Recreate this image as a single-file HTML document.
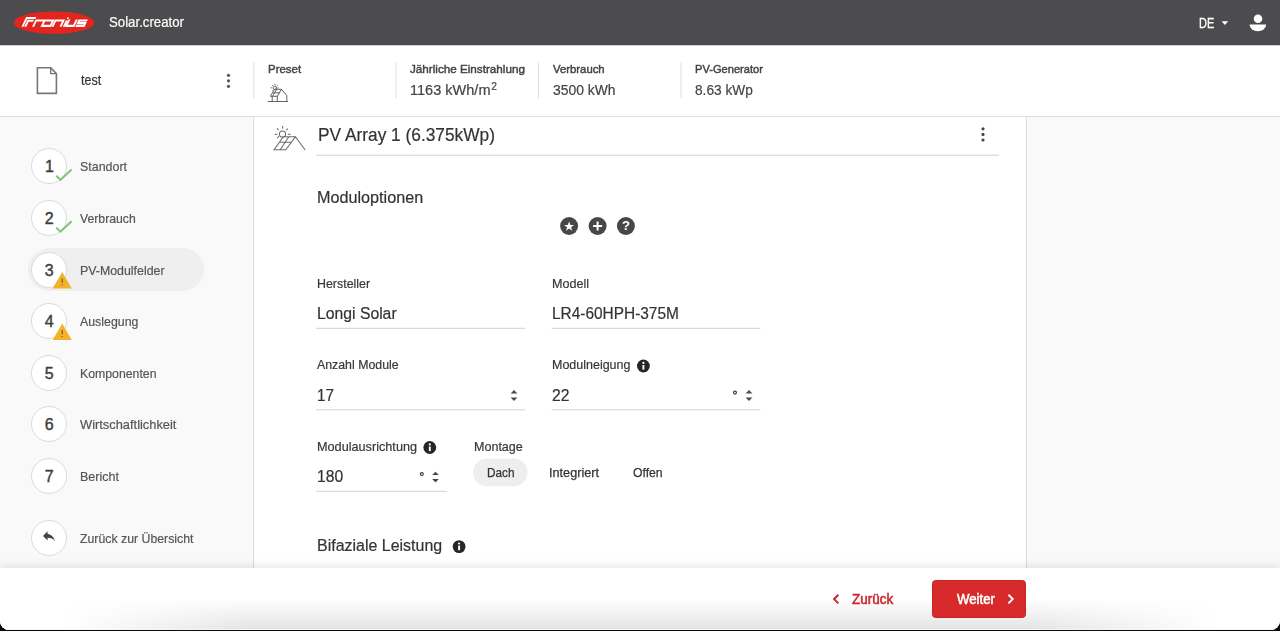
<!DOCTYPE html>
<html><head><meta charset="utf-8"><style>
*{box-sizing:border-box;margin:0;padding:0}
html,body{width:1280px;height:631px;overflow:hidden;background:#0a0a0a}
body{font-family:"Liberation Sans",sans-serif;color:#333;position:relative}
.abs{position:absolute}
svg{position:absolute;overflow:visible}
.t{position:absolute;white-space:nowrap;line-height:1}
#screen{position:absolute;left:0;top:0;width:1280px;height:630px;background:#f9f9f9;overflow:hidden;border-radius:0 0 9px 9px}
#topbar{position:absolute;left:0;top:0;width:1280px;height:45px;background:#4c4c4e;border-bottom:1px solid #434345}
#sub{position:absolute;left:0;top:45px;width:1280px;height:72px;background:#fff;border-bottom:1px solid #dedede}
#side{position:absolute;left:0;top:117px;width:254px;height:514px;background:#f9f9f9;border-right:1px solid #dcdcdc}
#main{position:absolute;left:254px;top:117px;width:773px;height:514px;background:#fff;border-right:1px solid #dcdcdc}
#footer{position:absolute;left:0;top:568px;width:1280px;height:63px;background:#fff;box-shadow:0 -3px 8px rgba(0,0,0,.09)}
#bshadow{position:absolute;left:60px;top:598px;width:1160px;height:31px;background:linear-gradient(to bottom,rgba(0,0,0,0),rgba(0,0,0,.10));-webkit-mask-image:linear-gradient(to right,transparent 0,#000 16%,#000 84%,transparent 100%)}
#brow{position:absolute;left:0;top:629px;width:1280px;height:1px;background:#f6f6f6}
.circ{position:absolute;width:36px;height:36px;border-radius:50%;background:#fff;border:1px solid #dadada}
</style></head><body>
<div id="screen">
<div id="topbar"></div>
<svg style="left:0;top:0" width="1280" height="44"><ellipse cx="54" cy="22.6" rx="40.3" ry="11.2" fill="#e2261d"/></svg>
<svg style="left:0;top:0" width="120" height="44"><g transform="matrix(1 0 -0.48 1 12.79 0)" fill="none" stroke="#fff" stroke-width="2.05" stroke-linejoin="miter"><path d="M22.5 26.65V17.9H31.6M25.3 26.65V20.7H30.6M33.1 26.65V20.4H41.0M41.6 20.4H50.1V25.85H41.6zM52.5 26.65V20.4H60.5V26.65M63.8 26.65V20.4M66 19.6V25.85H73.4V19.6M84.4 20.4H76.2V23.1H83.6V25.85H75.4"/><rect x="63" y="17.5" width="1.6" height="1.4" fill="#fff" stroke="none"/></g></svg>
<div class="t" style="left:108.80px;top:14.63px;font-size:14.5px;color:#fff;transform:scaleX(0.9124);transform-origin:0.00px 0;-webkit-text-stroke:0.2px #fff;">Solar.creator</div>
<div class="t" style="left:1198.90px;top:15.95px;font-size:14px;color:#fff;transform:scaleX(0.7866);transform-origin:0.00px 0;-webkit-text-stroke:0.35px #fff;-webkit-text-stroke-width:0.3px;">DE</div>
<svg style="left:0;top:0" width="1280" height="44"><path d="M1221.6 21.2h6.6l-3.3 3.9z" fill="#fff"/><circle cx="1258" cy="18.8" r="4.3" fill="#fff"/><path d="M1249.5 24.6h16.7a8.35 6.6 0 0 1 -16.7 0z" fill="#fff"/></svg>
<div id="sub"></div>
<div class="abs" style="left:0;top:45px;width:1280px;height:1px;background:#d4d4d4"></div>
<svg style="left:0;top:0" width="1280" height="120"><path d="M37.4 67.7h13.3l5.7 5.9v19.8h-19z" fill="none" stroke="#777" stroke-width="1.6" stroke-linejoin="miter"/><path d="M50.7 67.7v5.9h5.7" fill="none" stroke="#777" stroke-width="1.4"/><circle cx="228.5" cy="75.3" r="1.6" fill="#555"/><circle cx="228.5" cy="80.8" r="1.6" fill="#555"/><circle cx="228.5" cy="86.3" r="1.6" fill="#555"/><rect x="253.3" y="62.5" width="1" height="36" fill="#e0e0e0"/><rect x="395.6" y="62.5" width="1" height="36" fill="#e0e0e0"/><rect x="538" y="62.5" width="1" height="36" fill="#e0e0e0"/><rect x="680.5" y="62.5" width="1" height="36" fill="#e0e0e0"/><g fill="none" stroke="#5c5c5c" stroke-width="0.95" stroke-linecap="round"><circle cx="274.8" cy="87.8" r="1.7"/><path d="M272.4 85.3l.3.3M275 84.2v.4M277.5 85.3l-.3.3M271 87.8h.4M272.6 90.3l.3-.3M278.4 88h-.3"/><path d="M275 89.3h6.5l-4.2 7h-6.6z M276.7 89.3l-4.2 7 M273.2 92.8h6.5"/><path d="M281.5 89.3l5.3 6.3v5.9 M272.2 96.3v5.2 M277.3 96.3v5.2 M268.2 101.5h19.4"/></g></svg>
<div class="t" style="left:81.40px;top:73.15px;font-size:14px;color:#333;transform:scaleX(0.8958);transform-origin:0.00px 0;-webkit-text-stroke:0.2px #333;">test</div>
<div class="t" style="left:267.90px;top:64.47px;font-size:11.5px;color:#444;transform:scaleX(0.9955);transform-origin:0.00px 0;-webkit-text-stroke:0.35px #444;-webkit-text-stroke-width:0.45px;">Preset</div>
<div class="t" style="left:409.90px;top:64.47px;font-size:11.5px;color:#444;transform:scaleX(1.0155);transform-origin:0.00px 0;-webkit-text-stroke:0.35px #444;-webkit-text-stroke-width:0.45px;">Jährliche Einstrahlung</div>
<div class="t" style="left:409.90px;top:82.53px;font-size:14.5px;color:#444;transform:scaleX(1.0025);transform-origin:0.00px 0;-webkit-text-stroke:0.2px #444;">1163 kWh/m</div>
<div class="t" style="left:491.20px;top:81.83px;font-size:10px;color:#444;-webkit-text-stroke:0.2px #444;">2</div>
<div class="t" style="left:553.20px;top:64.47px;font-size:11.5px;color:#444;transform:scaleX(0.9857);transform-origin:0.00px 0;-webkit-text-stroke:0.35px #444;-webkit-text-stroke-width:0.45px;">Verbrauch</div>
<div class="t" style="left:552.80px;top:82.53px;font-size:14.5px;color:#444;transform:scaleX(0.9587);transform-origin:0.00px 0;-webkit-text-stroke:0.2px #444;">3500 kWh</div>
<div class="t" style="left:695.20px;top:64.47px;font-size:11.5px;color:#444;transform:scaleX(0.9659);transform-origin:0.00px 0;-webkit-text-stroke:0.35px #444;-webkit-text-stroke-width:0.45px;">PV-Generator</div>
<div class="t" style="left:695.20px;top:82.53px;font-size:14.5px;color:#444;transform:scaleX(0.9437);transform-origin:0.00px 0;-webkit-text-stroke:0.2px #444;">8.63 kWp</div>
<div id="side"></div>
<div class="abs" style="left:27.8px;top:247.8px;width:176.2px;height:43.6px;border-radius:22px;background:#efefef"></div>
<div class="circ" style="left:30.799999999999997px;top:148.2px"></div>
<div class="t" style="left:45.00px;top:159.26px;font-size:16px;color:#3d3d3d;-webkit-text-stroke:0.35px #3d3d3d;-webkit-text-stroke-width:0.4px;">1</div>
<div class="t" style="left:80.20px;top:160.37px;font-size:13.5px;color:#555;transform:scaleX(0.9226);transform-origin:0.00px 0;-webkit-text-stroke:0.2px #555;">Standort</div>
<div class="circ" style="left:30.799999999999997px;top:200px"></div>
<div class="t" style="left:44.70px;top:211.06px;font-size:16px;color:#3d3d3d;-webkit-text-stroke:0.35px #3d3d3d;-webkit-text-stroke-width:0.4px;">2</div>
<div class="t" style="left:80.20px;top:212.17px;font-size:13.5px;color:#555;transform:scaleX(0.9066);transform-origin:0.00px 0;-webkit-text-stroke:0.2px #555;">Verbrauch</div>
<div class="circ" style="left:30.799999999999997px;top:251.5px"></div>
<div class="t" style="left:44.70px;top:262.56px;font-size:16px;color:#3d3d3d;-webkit-text-stroke:0.35px #3d3d3d;-webkit-text-stroke-width:0.4px;">3</div>
<div class="t" style="left:80.20px;top:263.67px;font-size:13.5px;color:#555;transform:scaleX(0.9155);transform-origin:0.00px 0;-webkit-text-stroke:0.2px #555;">PV-Modulfelder</div>
<div class="circ" style="left:30.799999999999997px;top:303px"></div>
<div class="t" style="left:44.70px;top:314.06px;font-size:16px;color:#3d3d3d;-webkit-text-stroke:0.35px #3d3d3d;-webkit-text-stroke-width:0.4px;">4</div>
<div class="t" style="left:80.20px;top:315.17px;font-size:13.5px;color:#555;transform:scaleX(0.9154);transform-origin:0.00px 0;-webkit-text-stroke:0.2px #555;">Auslegung</div>
<div class="circ" style="left:30.799999999999997px;top:354.5px"></div>
<div class="t" style="left:44.70px;top:365.56px;font-size:16px;color:#3d3d3d;-webkit-text-stroke:0.35px #3d3d3d;-webkit-text-stroke-width:0.4px;">5</div>
<div class="t" style="left:80.20px;top:366.67px;font-size:13.5px;color:#555;transform:scaleX(0.9102);transform-origin:0.00px 0;-webkit-text-stroke:0.2px #555;">Komponenten</div>
<div class="circ" style="left:30.799999999999997px;top:406px"></div>
<div class="t" style="left:44.70px;top:417.06px;font-size:16px;color:#3d3d3d;-webkit-text-stroke:0.35px #3d3d3d;-webkit-text-stroke-width:0.4px;">6</div>
<div class="t" style="left:80.20px;top:418.17px;font-size:13.5px;color:#555;transform:scaleX(0.9521);transform-origin:0.00px 0;-webkit-text-stroke:0.2px #555;">Wirtschaftlichkeit</div>
<div class="circ" style="left:30.799999999999997px;top:457.5px"></div>
<div class="t" style="left:44.70px;top:468.56px;font-size:16px;color:#3d3d3d;-webkit-text-stroke:0.35px #3d3d3d;-webkit-text-stroke-width:0.4px;">7</div>
<div class="t" style="left:80.20px;top:469.67px;font-size:13.5px;color:#555;transform:scaleX(0.9262);transform-origin:0.00px 0;-webkit-text-stroke:0.2px #555;">Bericht</div>
<div class="circ" style="left:30.799999999999997px;top:519.6px"></div>
<svg style="left:0;top:0" width="254" height="631"><path d="M56.3 175.79999999999998l4.1 4.1 11.2-10.4" fill="none" stroke="#7cc576" stroke-width="2"/><path d="M56.3 227.6l4.1 4.1 11.2-10.4" fill="none" stroke="#7cc576" stroke-width="2"/><path d="M62.2 272.1l9.6 16.4h-19.2z" fill="#f2b32a"/><path d="M62.2 278.5v4.2 M62.2 284.5v1" stroke="#6b5320" stroke-width="1.1"/><path d="M62.2 323.6l9.6 16.4h-19.2z" fill="#f2b32a"/><path d="M62.2 330v4.2 M62.2 336v1" stroke="#6b5320" stroke-width="1.1"/><path transform="translate(41 528) scale(0.66)" d="M10 9V5l-7 7 7 7v-4.1c5 0 8.5 1.6 11 5.1-1-5-4-10-11-11z" fill="#444"/></svg>
<div class="t" style="left:80.20px;top:531.77px;font-size:13.5px;color:#555;transform:scaleX(0.9113);transform-origin:0.00px 0;-webkit-text-stroke:0.2px #555;">Zurück zur Übersicht</div>
<div id="main"></div>
<svg style="left:0;top:0" width="1280" height="631"><g fill="none" stroke="#6a6a6a" stroke-width="1.05" stroke-linecap="round"><circle cx="282.5" cy="134" r="3.1"/><path d="M282.7 126.3v2 M275 134.3h2 M288.3 134.3h2 M277.4 128.6l1 1.2 M286.6 130l1-1.2 M277.6 137.9l1-1.3"/><path d="M283.2 136.7h12.2l-9.6 13h-11.7z M288.8 136.7l-8.6 13 M280.4 142.3h10.9 M295.4 136.7l9.6 13"/></g><circle cx="983" cy="128.8" r="1.6" fill="#444"/><circle cx="983" cy="134.4" r="1.6" fill="#444"/><circle cx="983" cy="140" r="1.6" fill="#444"/><rect x="316" y="154.7" width="683" height="1" fill="#cfcfcf"/><circle cx="569.1" cy="226" r="9" fill="#474747"/><circle cx="597.6" cy="226" r="9" fill="#474747"/><circle cx="625.9" cy="226" r="9" fill="#474747"/><path transform="translate(569.1 226.6)" d="M0 -5.2L1.3 -1.6H5L2 0.6L3.1 4.2L0 2L-3.1 4.2L-2 0.6L-5 -1.6H-1.3z" fill="#fff"/><path d="M597.6 221.5v9 M593.1 226h9" stroke="#fff" stroke-width="2"/><rect x="316" y="327.8" width="209" height="1" fill="#d2d2d2"/><rect x="551.5" y="327.8" width="209" height="1" fill="#d2d2d2"/><rect x="316" y="409.3" width="209" height="1" fill="#d2d2d2"/><rect x="551.5" y="409.3" width="209" height="1" fill="#d2d2d2"/><rect x="316" y="490.8" width="130.5" height="1" fill="#d2d2d2"/><path d="M510.6 393.4l3.4-3.4 3.4 3.4z M510.6 397.6l3.4 3.4 3.4-3.4z" fill="#4a4a4a"/><path d="M745.6 393.4l3.4-3.4 3.4 3.4z M745.6 397.6l3.4 3.4 3.4-3.4z" fill="#4a4a4a"/><path d="M432.1 475.1l3.4-3.4 3.4 3.4z M432.1 479.1l3.4 3.4 3.4-3.4z" fill="#4a4a4a"/><circle cx="735" cy="392.6" r="1.45" fill="none" stroke="#3c3c3c" stroke-width="1.15"/><circle cx="421.8" cy="474" r="1.45" fill="none" stroke="#3c3c3c" stroke-width="1.15"/><rect x="473.1" y="458.5" width="54.4" height="27.8" rx="13.9" fill="#eeeeee"/></svg>
<svg style="left:0;top:0" width="1280" height="631"><circle cx="643.4" cy="366" r="6.4" fill="#262626"/><circle cx="643.4" cy="362.9" r="1.1" fill="#fff"/><rect x="642.4499999999999" y="365.0" width="1.9" height="4.6" fill="#fff"/><circle cx="429.8" cy="447.5" r="6.4" fill="#262626"/><circle cx="429.8" cy="444.4" r="1.1" fill="#fff"/><rect x="428.85" y="446.5" width="1.9" height="4.6" fill="#fff"/><circle cx="459.1" cy="546.6" r="6.4" fill="#262626"/><circle cx="459.1" cy="543.5" r="1.1" fill="#fff"/><rect x="458.15000000000003" y="545.6" width="1.9" height="4.6" fill="#fff"/></svg>
<div class="t" style="left:622.00px;top:219.40px;font-size:13px;color:#fff;font-weight:bold;">?</div>
<div class="t" style="left:317.50px;top:125.32px;font-size:19px;color:#333;transform:scaleX(0.9110);transform-origin:0.00px 0;-webkit-text-stroke:0.2px #333;">PV Array 1 (6.375kWp)</div>
<div class="t" style="left:316.90px;top:189.20px;font-size:16.3px;color:#333;transform:scaleX(0.9939);transform-origin:0.00px 0;-webkit-text-stroke:0.2px #333;">Moduloptionen</div>
<div class="t" style="left:316.60px;top:276.80px;font-size:13px;color:#383838;transform:scaleX(0.9550);transform-origin:0.00px 0;-webkit-text-stroke:0.2px #383838;">Hersteller</div>
<div class="t" style="left:316.60px;top:304.95px;font-size:16.3px;color:#333;transform:scaleX(0.9666);transform-origin:0.00px 0;-webkit-text-stroke:0.2px #333;">Longi Solar</div>
<div class="t" style="left:551.70px;top:276.80px;font-size:13px;color:#383838;transform:scaleX(0.9687);transform-origin:0.00px 0;-webkit-text-stroke:0.2px #383838;">Modell</div>
<div class="t" style="left:551.70px;top:304.95px;font-size:16.3px;color:#333;transform:scaleX(0.9471);transform-origin:0.00px 0;-webkit-text-stroke:0.2px #333;">LR4-60HPH-375M</div>
<div class="t" style="left:316.60px;top:357.75px;font-size:13px;color:#383838;transform:scaleX(0.9488);transform-origin:0.00px 0;-webkit-text-stroke:0.2px #383838;">Anzahl Module</div>
<div class="t" style="left:316.60px;top:386.80px;font-size:16.3px;color:#333;transform:scaleX(0.9366);transform-origin:0.00px 0;-webkit-text-stroke:0.2px #333;">17</div>
<div class="t" style="left:551.60px;top:357.75px;font-size:13px;color:#383838;transform:scaleX(0.9602);transform-origin:0.00px 0;-webkit-text-stroke:0.2px #383838;">Modulneigung</div>
<div class="t" style="left:551.60px;top:386.80px;font-size:16.3px;color:#333;transform:scaleX(0.9642);transform-origin:0.00px 0;-webkit-text-stroke:0.2px #333;">22</div>
<div class="t" style="left:316.60px;top:439.60px;font-size:13px;color:#383838;transform:scaleX(0.9747);transform-origin:0.00px 0;-webkit-text-stroke:0.2px #383838;">Modulausrichtung</div>
<div class="t" style="left:316.60px;top:468.30px;font-size:16.3px;color:#333;transform:scaleX(0.9632);transform-origin:0.00px 0;-webkit-text-stroke:0.2px #333;">180</div>
<div class="t" style="left:473.50px;top:439.60px;font-size:13px;color:#383838;transform:scaleX(0.9644);transform-origin:0.00px 0;-webkit-text-stroke:0.2px #383838;">Montage</div>
<div class="t" style="left:486.80px;top:465.50px;font-size:13px;color:#333;transform:scaleX(0.9094);transform-origin:0.00px 0;-webkit-text-stroke:0.35px #333;-webkit-text-stroke-width:0.25px;">Dach</div>
<div class="t" style="left:548.70px;top:465.50px;font-size:13px;color:#333;transform:scaleX(0.9747);transform-origin:0.00px 0;-webkit-text-stroke:0.35px #333;-webkit-text-stroke-width:0.25px;">Integriert</div>
<div class="t" style="left:632.90px;top:465.50px;font-size:13px;color:#333;transform:scaleX(0.9382);transform-origin:0.00px 0;-webkit-text-stroke:0.35px #333;-webkit-text-stroke-width:0.25px;">Offen</div>
<div class="t" style="left:316.60px;top:537.10px;font-size:16.3px;color:#333;transform:scaleX(0.9808);transform-origin:0.00px 0;-webkit-text-stroke:0.2px #333;">Bifaziale Leistung</div>
<div id="footer"></div>
<div id="bshadow"></div><div id="brow"></div>
<div class="abs" style="left:931.7px;top:579.5px;width:94.6px;height:38.6px;border-radius:3.5px;background:#d72a2a;border:1px solid #c92525"></div>
<svg style="left:0;top:0" width="1280" height="631"><path d="M838.4 594.8l-4.3 4.3 4.3 4.3" fill="none" stroke="#c8282e" stroke-width="2"/><path d="M1008.4 594.8l4.3 4.3-4.3 4.3" fill="none" stroke="#fff" stroke-width="2"/></svg>
<div class="t" style="left:851.80px;top:591.65px;font-size:14px;color:#c8282e;transform:scaleX(0.9615);transform-origin:0.00px 0;-webkit-text-stroke:0.35px #c8282e;-webkit-text-stroke-width:0.55px;">Zurück</div>
<div class="t" style="left:956.60px;top:591.65px;font-size:14px;color:#fff;transform:scaleX(0.9428);transform-origin:0.00px 0;-webkit-text-stroke:0.35px #fff;-webkit-text-stroke-width:0.55px;">Weiter</div>
</div>
</body></html>
